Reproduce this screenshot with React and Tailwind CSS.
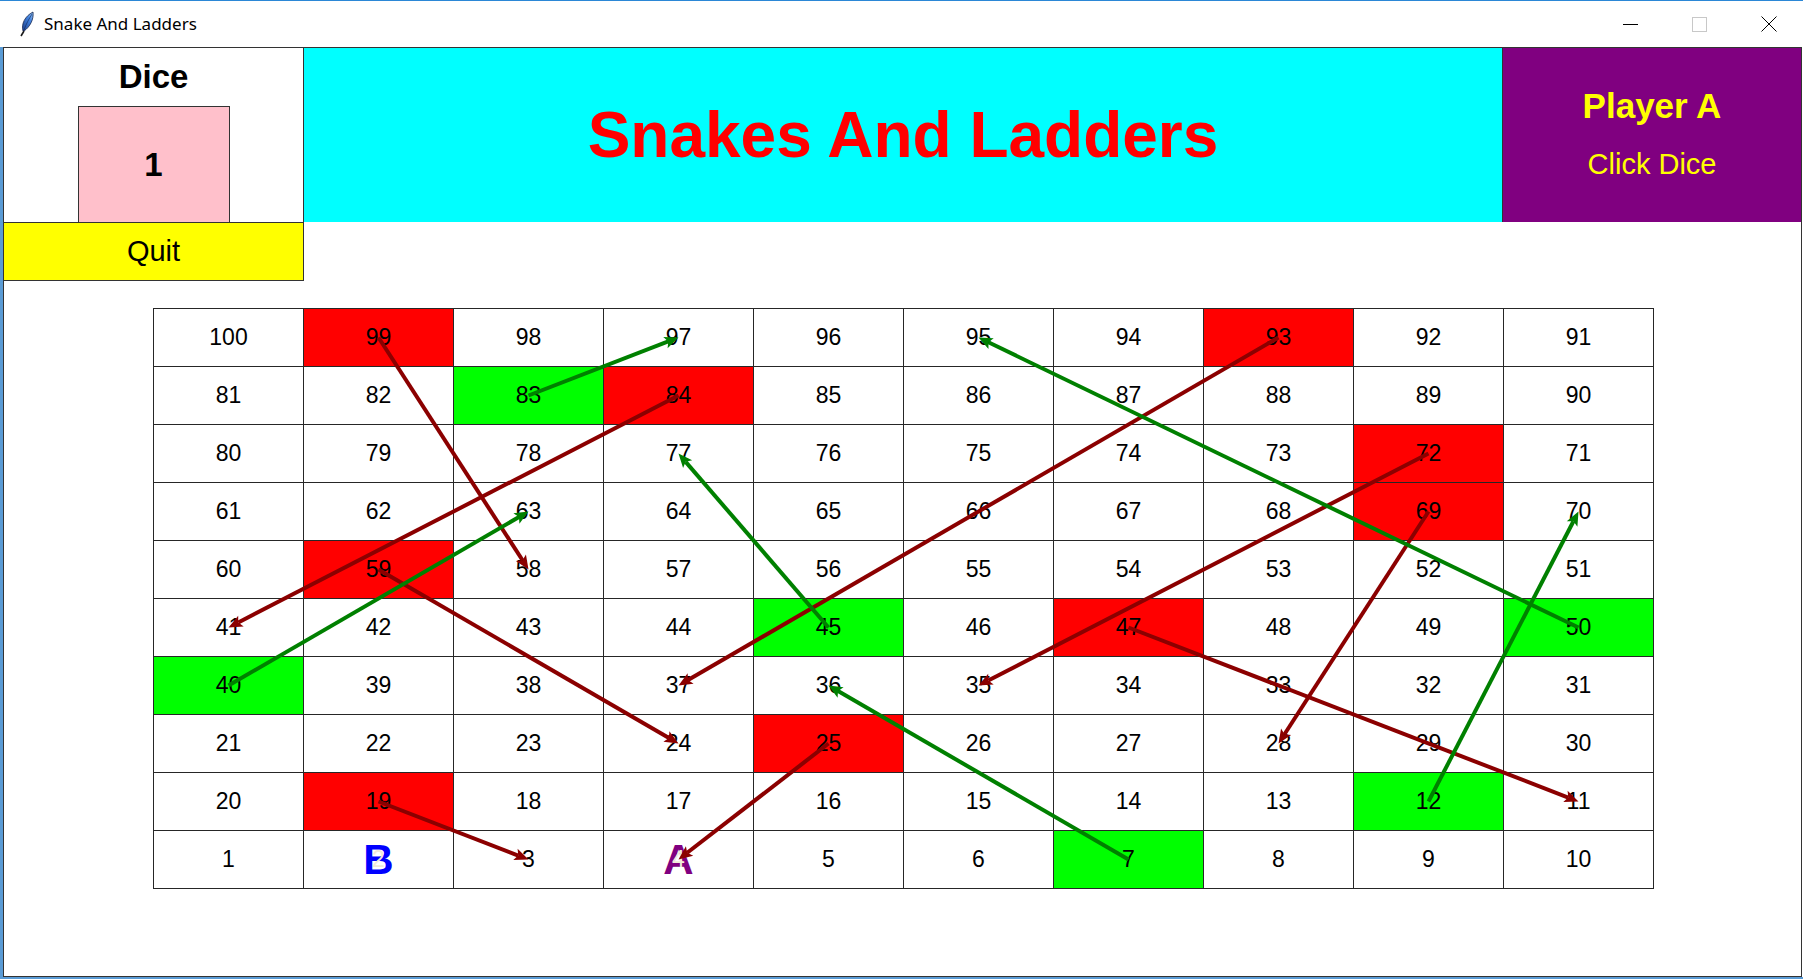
import React from "react";

const RED = new Set([99, 93, 84, 72, 69, 59, 47, 25, 19]);
const GREEN = new Set([83, 40, 45, 50, 12, 7]);
const SNAKES = [[99, 58], [84, 41], [93, 37], [72, 35], [69, 28], [59, 24], [47, 11], [25, 4], [19, 3]];
const LADDERS = [[83, 97], [40, 63], [45, 77], [7, 36], [50, 95], [12, 70]];

function numAt(r, c) {
  const b = 9 - r;
  return b % 2 === 0 ? b * 10 + c + 1 : b * 10 + 10 - c;
}

function pos(n) {
  const b = Math.floor((n - 1) / 10);
  const k = (n - 1) % 10;
  const col = b % 2 === 0 ? k : 9 - k;
  const row = 9 - b;
  return [150 * col + 74.5, 58 * row + 28.5];
}

function Arrow({ from, to, color }) {
  const [x1, y1] = pos(from);
  const [x2, y2] = pos(to);
  const dx = x2 - x1;
  const dy = y2 - y1;
  const len = Math.hypot(dx, dy);
  const ux = dx / len;
  const uy = dy / len;
  const px = -uy;
  const py = ux;
  const L = 14;
  const neck = 11;
  const hw = 6;
  const nx = x2 - ux * neck;
  const ny = y2 - uy * neck;
  const pts = [
    [x2, y2],
    [x2 - ux * L + px * hw, y2 - uy * L + py * hw],
    [nx, ny],
    [x2 - ux * L - px * hw, y2 - uy * L - py * hw],
  ]
    .map((p) => p.join(","))
    .join(" ");
  return (
    <g>
      <line x1={x1} y1={y1} x2={nx} y2={ny} stroke={color} strokeWidth={4} />
      <polygon points={pts} fill={color} />
    </g>
  );
}

function Cell({ n }) {
  const bg = RED.has(n) ? "bg-[#ff0000]" : GREEN.has(n) ? "bg-[#00ff00]" : "bg-white";
  let token = null;
  if (n === 2) token = <span className="absolute inset-0 flex items-center justify-center text-[42px] font-bold text-[#0000ff]">B</span>;
  if (n === 4) token = <span className="absolute inset-0 flex items-center justify-center text-[42px] font-bold text-[#800080]">A</span>;
  return (
    <div className={`relative w-[150px] h-[58px] border-r border-b border-[#262626] flex items-center justify-center ${bg}`}>
      {token}
      <span className={token ? "relative text-[23px] text-[#f2ead8]" : "relative text-[23px] text-black"}>{n}</span>
    </div>
  );
}

function Feather() {
  return (
    <svg width="24" height="26" viewBox="0 0 24 26">
      <defs>
        <linearGradient id="fg" x1="0" y1="1" x2="1" y2="0">
          <stop offset="0" stopColor="#1d3f8a" />
          <stop offset="0.6" stopColor="#3f7fdc" />
          <stop offset="1" stopColor="#8fc0f5" />
        </linearGradient>
      </defs>
      <path d="M8 20 C 6 13, 10 5, 18 1 C 19 8, 15 16, 9 20 Z" fill="url(#fg)" stroke="#14254d" strokeWidth="0.8" />
      <path d="M9 20 L 6 25" stroke="#1a1a1a" strokeWidth="1.6" />
      <path d="M9 19 C 11 13, 14 8, 17 3" stroke="#0e2350" strokeWidth="0.6" fill="none" />
    </svg>
  );
}

export default function App() {
  const rows = [];
  for (let r = 0; r < 10; r++) {
    const cells = [];
    for (let c = 0; c < 10; c++) cells.push(<Cell key={c} n={numAt(r, c)} />);
    rows.push(
      <div key={r} className="flex">
        {cells}
      </div>
    );
  }

  return (
    <div className="w-[1803px] h-[979px] bg-white flex flex-col overflow-hidden font-['Liberation_Sans',Arial,sans-serif]">
      {/* Title bar */}
      <div className="h-[47px] border-t border-[#2b87d6] flex items-center bg-white">
        <div className="pl-[15px] flex items-center">
          <Feather />
        </div>
        <span className="ml-[5px] text-[17px] text-black font-['Noto_Sans',sans-serif]">Snake And Ladders</span>
        <div className="ml-auto flex h-full">
          <div className="w-[69px] h-full flex items-center justify-center">
            <div className="w-[15px] h-px bg-black" />
          </div>
          <div className="w-[69px] h-full flex items-center justify-center">
            <div className="w-[15px] h-[15px] border border-[#c8c8c8]" />
          </div>
          <div className="w-[69px] h-full flex items-center justify-center">
            <svg width="16" height="16" viewBox="0 0 16 16">
              <path d="M0.5 0.5 L15.5 15.5 M15.5 0.5 L0.5 15.5" stroke="#000" strokeWidth="1" />
            </svg>
          </div>
        </div>
      </div>

      {/* Window body */}
      <div className="flex h-[930px]">
        <div className="w-[3px] h-full bg-[#5a9bd5]" />
        <div className="w-[1799px] h-full border-l border-r border-b border-[#333333] flex flex-col">
          {/* Header */}
          <div className="h-[175px] flex">
            <div className="w-[300px] border-t border-r border-[#333333] flex flex-col items-center">
              <div className="mt-[9px] text-[33px] leading-[40px] font-bold text-black">Dice</div>
              <div className="mt-[9px] w-[152px] flex-1 border-l border-t border-r border-[#333333] bg-[#ffc0cb] flex items-center justify-center text-[33px] font-bold text-black">
                1
              </div>
            </div>
            <div className="w-[1198px] border-t border-[#333333] bg-[#00ffff] flex items-center justify-center">
              <span className="text-[64px] font-bold text-[#ff0000] leading-none">Snakes And Ladders</span>
            </div>
            <div className="flex-1 border-t border-l border-[#333333] bg-[#800080] flex flex-col items-center justify-center gap-[21px] pb-[4px] text-[#ffff00]">
              <div className="text-[35px] leading-[40px] font-bold">Player A</div>
              <div className="text-[29px] leading-[34px]">Click Dice</div>
            </div>
          </div>

          {/* Quit */}
          <div className="w-[300px] h-[59px] border-t border-r border-b border-[#333333] bg-[#ffff00] flex items-center justify-center text-[29px] text-black">
            Quit
          </div>

          {/* Board */}
          <div className="ml-[149px] mt-[27px] relative w-[1501px] border-l border-t border-[#262626]">
            {rows}
            <svg className="absolute left-0 top-0 pointer-events-none overflow-visible" width="1500" height="580">
              {SNAKES.map(([a, b], i) => (
                <Arrow key={"s" + i} from={a} to={b} color="#8b0000" />
              ))}
              {LADDERS.map(([a, b], i) => (
                <Arrow key={"l" + i} from={a} to={b} color="#008000" />
              ))}
            </svg>
          </div>
        </div>
      </div>
      <div className="h-[2px] bg-[#5a9bd5]" />
    </div>
  );
}
